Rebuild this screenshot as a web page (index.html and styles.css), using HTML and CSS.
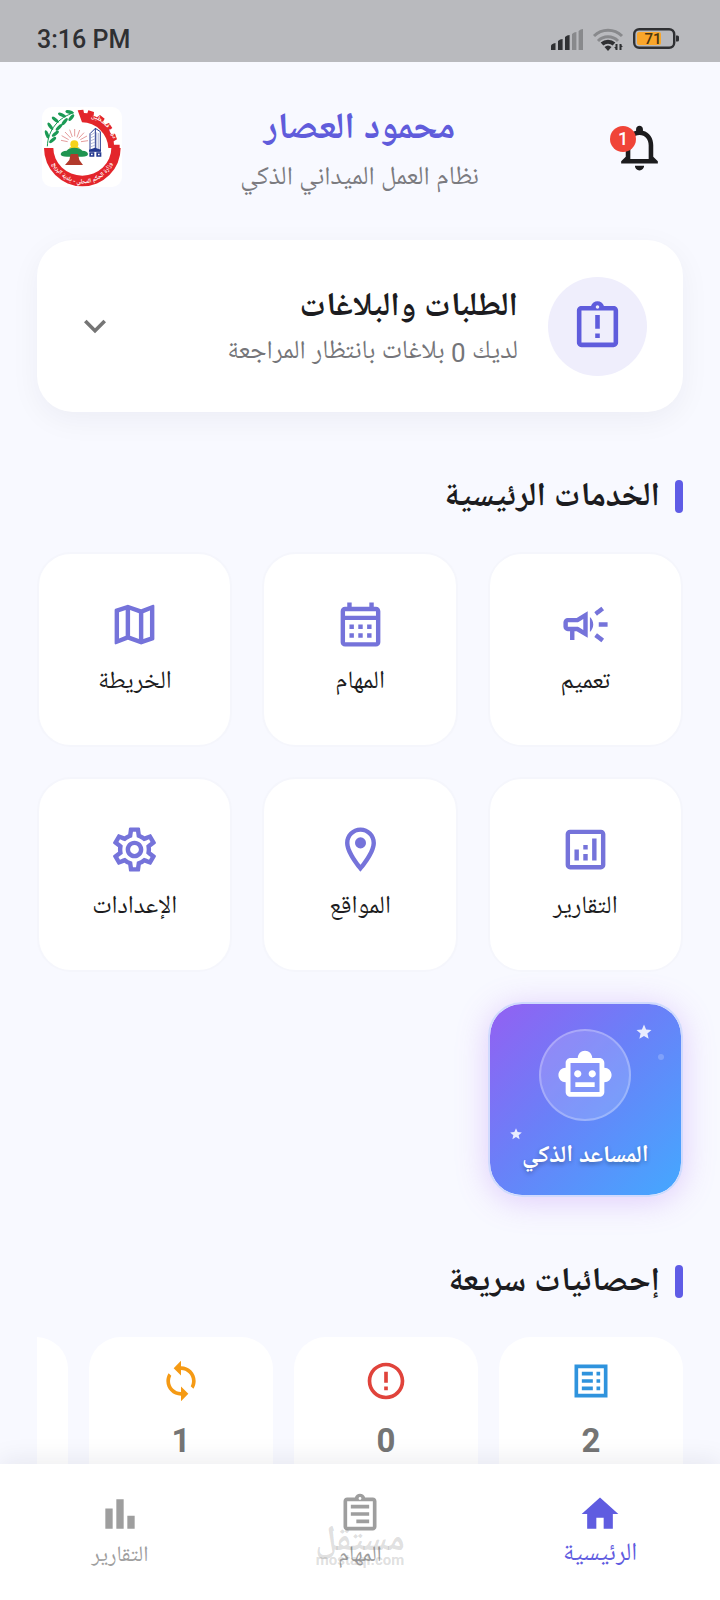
FILE: index.html
```
<!DOCTYPE html>
<html lang="ar" dir="rtl">
<head>
	<meta charset="utf-8">
	<meta name="viewport" content="width=device-width, initial-scale=1">
	<title>نظام العمل الميداني الذكي</title>
	<link rel="stylesheet" href="styles.css">
</head>
<body>
	<div class="status-bar" dir="ltr">
		<span class="time">3:16 PM</span>
		<div class="status-icons">
			<svg width="32" height="21" viewBox="0 0 32 21">
				<path fill="#2f3033" d="M0 21v-4q0-2 4.500-3v7zM7 21V12q2-2 4.600-2v11zM14 21V8q2-2 4.600-2v15z"/>
				<path fill="#88898c" d="M21 21V5q2-2 4.400-2v18zM27.600 21V2q2-2 4.400-2v21z"/>
			</svg>
			<svg width="32" height="24" viewBox="0 0 32 24" fill="none" stroke-width="3">
				<path fill="none" stroke="#88898c" d="M2 9a20 20 0 0 1 28 0M6 14a14 14 0 0 1 20 0"/>
				<path fill="none" stroke="#2f3033" stroke-width="4" d="M10 17a9 9 0 0 1 12 0"/>
				<path fill="#2f3033" d="M12.500 20q3.500-3 7 0l-3.500 4z"/>
				<path fill="none" stroke="#2f3033" stroke-width="2" d="M24.500 23v-6M28.500 17v6"/>
				<path fill="#2f3033" d="M22 20h3v3zM31 20h-3v-3z"/>
			</svg>
			<svg width="46" height="22" viewBox="0 0 46 22">
				<rect x="1.200" y="1.200" width="40" height="18.600" rx="5" fill="none" stroke="#2f3033" stroke-width="2.400"/>
				<rect x="4" y="4" width="24" height="13" rx="2" fill="#f9a62b"/>
				<path d="M43 7.500h1.500a1.500 1.500 0 0 1 1.500 1.500v3a1.500 1.500 0 0 1-1.500 1.500H43z" fill="#2f3033"/>
				<text x="20" y="16" text-anchor="middle" class="battery-text">71</text>
			</svg>
		</div>
	</div>

	<main>
		<header class="header">
			<button class="bell" aria-label="الإشعارات">
				<svg width="55" height="55" viewBox="0 0 24 24"><path d="M12 22c1.100 0 2-.9 2-2h-4c0 1.100.9 2 2 2zm6-6v-5c0-3.070-1.630-5.640-4.500-6.320V4c0-.83-.67-1.500-1.500-1.500s-1.500.67-1.500 1.500v.68C7.640 5.360 6 7.920 6 11v5l-2 2v1h16v-1l-2-2zm-2 1H8v-6c0-2.480 1.510-4.500 4-4.500s4 2.020 4 4.500v6z"/></svg>
				<span class="badge">1</span>
			</button>
			<div class="heading">
				<h1>محمود العصار</h1>
				<p>نظام العمل الميداني الذكي</p>
			</div>
			<svg class="logo" viewBox="66 48 240 240">
				<rect x="66" y="48" width="240" height="240" rx="30" fill="#fff"/>
				<!-- gear half of the ring -->
				<path fill="#e3252b" d="M173 58l17-2 2 10 10 1 3-9 17 5-1 11 10 5 9-7 14 11-5 9 7 8 11-4 10 15-8 8 4 10 12-1 6 17-10 6 1 10h17v10h-34a80 80 0 0 0-79-77z"/>
				<path fill="#e3252b" d="M72 171h28a87 83 0 0 0 174 0h28a115 115 0 0 1-230 0z"/>
				<!-- olive branch -->
				<path d="M82 166c2-50 34-87 80-101" fill="none" stroke="#1b9a55" stroke-width="3"/>
				<g fill="#1b9a55">
					<ellipse cx="148" cy="63" rx="12" ry="5" transform="rotate(12 148 63)"/>
					<ellipse cx="154" cy="80" rx="12" ry="5" transform="rotate(-50 154 80)"/>
					<ellipse cx="126" cy="72" rx="13" ry="5" transform="rotate(25 126 72)"/>
					<ellipse cx="134" cy="92" rx="13" ry="5" transform="rotate(-50 134 92)"/>
					<ellipse cx="106" cy="86" rx="13" ry="5" transform="rotate(40 106 86)"/>
					<ellipse cx="117" cy="109" rx="13" ry="5" transform="rotate(-45 117 109)"/>
					<ellipse cx="91" cy="106" rx="13" ry="5" transform="rotate(55 91 106)"/>
					<ellipse cx="106" cy="128" rx="13" ry="5" transform="rotate(-40 106 128)"/>
					<ellipse cx="81" cy="130" rx="13" ry="5" transform="rotate(70 81 130)"/>
					<ellipse cx="98" cy="147" rx="13" ry="5" transform="rotate(-40 98 147)"/>
				</g>
				<!-- sun and tree -->
				<path stroke="#d66a6a" stroke-width="2" d="M123 148l20 4M125 134l21 12M135 123l17 18M149 116l8 22M164 114v22M179 117l-8 22M192 125l-16 17M201 135l-20 11M204 149l-21 3"/>
				<circle cx="163" cy="160" r="12" fill="#f5d31c"/>
				<path fill="#f5d31c" d="M146 172q17-16 34 0z"/>
				<path fill="#1f9450" d="M122 189q2-9 18-10 6-9 23-9t24 9q16 1 17 10 0 8-18 8h-45q-19 0-19-8z"/>
				<path fill="#b23a2c" d="M152 189h22l4 18 11 15h-54l13-15z"/>
				<!-- tower -->
				<path fill="#fff" stroke="#24388f" stroke-width="3" d="M210 180v-52l16-16v68M226 112l15 10v58h-34"/>
				<path stroke="#24388f" stroke-width="1" d="M213 132l11-7M213 140l11-5M213 149l11-5M213 158l11-4M213 167l11-4M230 124v52M235 126v50"/>
				<path fill="#24388f" d="M207 176l18-6 18 6v6h-36zM208 184h15v13h-15zM229 184h15v13h-15z"/>
				<path fill="#fff" d="M213 188h5v5h-5zM234 188h5v5h-5z"/>
				<path id="ring-bottom" fill="none" d="M88 183a99 97 0 0 0 198 0"/>
				<path id="ring-top" fill="none" d="M189 79a92 92 0 0 1 92 89"/>
				<g class="ring-text" text-anchor="middle">
					<text><textPath href="#ring-bottom" startOffset="50%">وزارة الحكم المحلي - بلدية البريج</textPath></text>
					<text><textPath href="#ring-top" startOffset="50%">دولة فلسطين</textPath></text>
				</g>
			</svg>
		</header>

		<button class="requests">
			<span class="requests-icon">
				<svg width="55" height="55" viewBox="0 0 24 24"><path d="M19 3h-4.180C14.400 1.840 13.300 1 12 1s-2.400.84-2.820 2H5c-1.100 0-2 .9-2 2v14c0 1.100.9 2 2 2h14c1.100 0 2-.9 2-2V5c0-1.100-.9-2-2-2zm-7-.25c.41 0 .75.34.75.75s-.34.75-.75.75-.75-.34-.75-.75.34-.75.75-.75zM19 19H5V5h14v14zM11 15h2v2h-2zM11 7h2v6h-2z"/></svg>
			</span>
			<span class="requests-text">
				<strong>الطلبات والبلاغات</strong>
				<span>لديك 0 بلاغات بانتظار المراجعة</span>
			</span>
			<svg class="chevron" width="44" height="44" viewBox="0 0 24 24"><path d="M7.410 8.590L12 13.170l4.590-4.580L18 10l-6 6-6-6z"/></svg>
		</button>

		<h2>الخدمات الرئيسية</h2>
		<div class="services">
			<a class="tile" href="#">
				<svg viewBox="0 0 24 24"><path d="M18 11v2h4v-2h-4zM16 17.610c.96.71 2.210 1.650 3.200 2.390.4-.53.8-1.070 1.200-1.600-.99-.74-2.240-1.680-3.200-2.400-.4.54-.8 1.080-1.200 1.610zM20.400 5.600c-.4-.53-.8-1.070-1.200-1.600-.99.74-2.240 1.680-3.200 2.400.4.53.8 1.070 1.200 1.600.96-.72 2.210-1.650 3.200-2.400zM4 9c-1.100 0-2 .9-2 2v2c0 1.100.9 2 2 2h1v4h2v-4h1l5 3V6L8 9H4zm5.030 1.710L11 9.530v4.940l-1.970-1.180-.48-.29H4v-2h4.550l.48-.29zM15.500 12c0-1.330-.58-2.530-1.500-3.350v6.690c.92-.81 1.500-2.010 1.500-3.340z"/></svg>
				<span>تعميم</span>
			</a>
			<a class="tile" href="#">
				<svg viewBox="0 0 24 24"><path d="M19 4h-1V2h-2v2H8V2H6v2H5c-1.110 0-1.990.9-1.990 2L3 20c0 1.100.89 2 2 2h14c1.100 0 2-.9 2-2V6c0-1.100-.9-2-2-2zm0 16H5V10h14v10zm0-12H5V6h14v2zM9 14H7v-2h2v2zm4 0h-2v-2h2v2zm4 0h-2v-2h2v2zm-8 4H7v-2h2v2zm4 0h-2v-2h2v2zm4 0h-2v-2h2v2z"/></svg>
				<span>المهام</span>
			</a>
			<a class="tile" href="#">
				<svg viewBox="0 0 24 24"><path d="M20.500 3l-.16.03L15 5.100 9 3 3.360 4.900c-.21.07-.36.25-.36.48V20.500c0 .28.22.5.5.5l.16-.03L9 18.900l6 2.100 5.640-1.900c.21-.07.36-.25.36-.48V3.500c0-.28-.22-.5-.5-.5zM10 5.470l4 1.400v11.660l-4-1.400V5.470zm-5 .99l3-1.010v11.700l-3 1.160V6.460zm14 11.080l-3 1.010V6.860l3-1.160v11.840z"/></svg>
				<span>الخريطة</span>
			</a>
			<a class="tile" href="#">
				<svg viewBox="0 0 24 24"><path d="M19 3H5c-1.100 0-2 .9-2 2v14c0 1.100.9 2 2 2h14c1.100 0 2-.9 2-2V5c0-1.100-.9-2-2-2zm0 16H5V5h14v14zM7 12h2v5H7zM15 7h2v10h-2zM11 14h2v3h-2zM11 10h2v2h-2z"/></svg>
				<span>التقارير</span>
			</a>
			<a class="tile" href="#">
				<svg viewBox="0 0 24 24"><path d="M12 2C8.130 2 5 5.130 5 9c0 5.250 7 13 7 13s7-7.750 7-13c0-3.870-3.130-7-7-7zM7 9c0-2.760 2.240-5 5-5s5 2.240 5 5c0 2.880-2.880 7.190-5 9.880C9.920 16.210 7 11.850 7 9z"/><circle cx="12" cy="9" r="2.500"/></svg>
				<span>المواقع</span>
			</a>
			<a class="tile" href="#">
				<svg viewBox="0 0 24 24"><path d="M19.430 12.980c.04-.32.07-.64.07-.98s-.03-.66-.07-.98l2.110-1.650c.19-.15.24-.42.12-.64l-2-3.460c-.09-.16-.26-.25-.44-.25-.06 0-.12.01-.17.03l-2.490 1c-.52-.4-1.080-.73-1.690-.98l-.38-2.650C14.460 2.180 14.250 2 14 2h-4c-.25 0-.46.18-.49.42l-.38 2.650c-.61.25-1.170.59-1.690.98l-2.490-1c-.06-.02-.12-.03-.18-.03-.17 0-.34.09-.43.25l-2 3.460c-.13.22-.07.49.12.64l2.110 1.650c-.04.32-.07.65-.07.98s.03.66.07.98l-2.110 1.650c-.19.15-.24.42-.12.64l2 3.460c.09.16.26.25.44.25.06 0 .12-.01.17-.03l2.490-1c.52.4 1.080.73 1.690.98l.38 2.650c.03.24.24.42.49.42h4c.25 0 .46-.18.49-.42l.38-2.650c.61-.25 1.170-.59 1.690-.98l2.490 1c.06.02.12.03.18.03.17 0 .34-.09.43-.25l2-3.460c.12-.22.07-.49-.12-.64l-2.110-1.650zm-1.980-1.710c.04.31.05.52.05.73 0 .21-.02.43-.05.73l-.14 1.130.89.7 1.080.84-.7 1.210-1.270-.51-1.040-.42-.9.68c-.43.32-.84.56-1.250.73l-1.060.43-.16 1.130-.2 1.350h-1.400l-.19-1.350-.16-1.130-1.060-.43c-.43-.18-.83-.41-1.230-.71l-.91-.7-1.060.43-1.270.51-.7-1.210 1.080-.84.89-.7-.14-1.130c-.03-.31-.05-.54-.05-.74s.02-.43.05-.73l.14-1.130-.89-.7-1.080-.84.7-1.210 1.270.51 1.040.42.9-.68c.43-.32.84-.56 1.250-.73l1.060-.43.16-1.130.2-1.350h1.390l.19 1.350.16 1.130 1.060.43c.43.18.83.41 1.230.71l.91.7 1.060-.43 1.270-.51.7 1.210-1.070.85-.89.7.14 1.130zM12 8c-2.210 0-4 1.790-4 4s1.790 4 4 4 4-1.790 4-4-1.790-4-4-4zm0 6c-1.100 0-2-.9-2-2s.9-2 2-2 2 .9 2 2-.9 2-2 2z"/></svg>
				<span>الإعدادات</span>
			</a>
			<a class="tile assistant" href="#">
				<span class="robot">
					<svg viewBox="0 0 24 24"><path d="M20 9V7c0-1.100-.9-2-2-2h-3c0-1.660-1.340-3-3-3S9 3.340 9 5H6c-1.100 0-2 .9-2 2v2c-1.660 0-3 1.340-3 3s1.340 3 3 3v4c0 1.100.9 2 2 2h12c1.100 0 2-.9 2-2v-4c1.660 0 3-1.340 3-3s-1.340-3-3-3zm-2 10H6V7h12v12zm-9-6c-.83 0-1.500-.67-1.500-1.500S8.170 10 9 10s1.500.67 1.500 1.500S9.830 13 9 13zm7.500-1.500c0 .83-.67 1.500-1.500 1.500s-1.500-.67-1.500-1.500.67-1.500 1.500-1.500 1.500.67 1.500 1.500zM8 15h8v2H8v-2z"/></svg>
				</span>
				<span>المساعد الذكي</span>
				<svg class="star star-big" viewBox="0 0 24 24"><path d="M12 17.270L18.180 21l-1.640-7.030L22 9.240l-7.190-.61L12 2 9.190 8.630 2 9.240l5.460 4.730L5.820 21z"/></svg>
				<svg class="star star-small" viewBox="0 0 24 24"><path d="M12 17.270L18.180 21l-1.640-7.030L22 9.240l-7.190-.61L12 2 9.190 8.630 2 9.240l5.460 4.730L5.820 21z"/></svg>
				<i class="dot"></i>
			</a>
		</div>

		<h2>إحصائيات سريعة</h2>
		<div class="stats">
			<div class="stat blue">
				<svg viewBox="0 0 24 24"><path d="M3 3v18h18V3zM19 19H5V5h14zM7 7h6v2H7zM7 11h6v2H7zM7 15h6v2H7zM15 7h2v2h-2zM15 11h2v2h-2zM15 15h2v2h-2z"/></svg>
				<b>2</b>
			</div>
			<div class="stat red">
				<svg viewBox="0 0 24 24"><path d="M11 15h2v2h-2zm0-8h2v6h-2zm.99-5C6.470 2 2 6.480 2 12s4.470 10 9.990 10C17.520 22 22 17.520 22 12S17.520 2 11.990 2zM12 20c-4.420 0-8-3.580-8-8s3.580-8 8-8 8 3.580 8 8-3.580 8-8 8z"/></svg>
				<b>0</b>
			</div>
			<div class="stat orange">
				<svg viewBox="0 0 24 24"><path d="M12 4V1L8 5l4 4V6c3.310 0 6 2.690 6 6 0 1.010-.25 1.970-.7 2.800l1.460 1.460C19.540 15.030 20 13.570 20 12c0-4.420-3.580-8-8-8zm0 14c-3.310 0-6-2.690-6-6 0-1.010.25-1.970.7-2.800L5.240 7.740C4.460 8.970 4 10.430 4 12c0 4.420 3.580 8 8 8v3l4-4-4-4v3z"/></svg>
				<b>1</b>
			</div>
			<div class="stat"></div>
		</div>
	</main>

	<nav class="bottom-nav">
		<a class="active" href="#">
			<svg viewBox="0 0 24 24"><path d="M10 20v-6h4v6h5v-8h3L12 3 2 12h3v8z"/></svg>
			<span>الرئيسية</span>
		</a>
		<a href="#">
			<svg viewBox="0 0 24 24"><path d="M19 3h-4.180C14.400 1.840 13.300 1 12 1s-2.400.84-2.820 2H5c-1.100 0-2 .9-2 2v14c0 1.100.9 2 2 2h14c1.100 0 2-.9 2-2V5c0-1.100-.9-2-2-2zm-7-.25c.41 0 .75.34.75.75s-.34.75-.75.75-.75-.34-.75-.75.34-.75.75-.75zM19 19H5V5h14v14zM7 7h10v2H7zM7 11h10v2H7zM10 15h7v2h-7z"/></svg>
			<span>المهام</span>
		</a>
		<a href="#">
			<svg viewBox="0 0 24 24"><path d="M4 9h4v11H4zM16 13h4v7h-4zM10 4h4v16h-4z"/></svg>
			<span>التقارير</span>
		</a>
		<div class="watermark">
			<b>مستقل</b>
			<span>mostaql.com</span>
		</div>
	</nav>
</body>
</html>
```
FILE: styles.css
```
* {
	box-sizing: border-box;
}

body {
	margin: 0;
	height: 100vh;
	display: flex;
	flex-direction: column;
	overflow: hidden;
	background: #f8f9ff;
	color: #1c1c20;
	font-family: Roboto, "Noto Naskh Arabic UI", "Noto Naskh Arabic", "Noto Sans Arabic", "DejaVu Sans", sans-serif;
	font-size: 25px;
}

a {
	color: inherit;
	text-decoration: none;
}

button {
	border: 0;
	padding: 0;
	background: none;
	color: inherit;
	font: inherit;
	cursor: pointer;
}

svg {
	display: block;
	flex: none;
	fill: currentColor;
}

.status-bar {
	display: flex;
	flex: none;
	align-items: center;
	justify-content: space-between;
	height: 62px;
	padding: 16px 41px 0 37px;
	background: #b9babe;
	color: #2f3033;
}

.time {
	font-size: 25px;
	font-weight: 500;
}

.status-icons {
	display: flex;
	align-items: center;
	gap: 9px;
}

.battery-text {
	font-size: 15px;
	font-weight: 500;
	fill: #4a3510;
}

main {
	flex: 1;
	min-height: 0;
	padding: 0 37px;
	overflow: hidden;
}

.header {
	display: flex;
	align-items: center;
	height: 178px;
	padding: 0 2px 8px 5px;
}

.bell {
	position: relative;
	display: flex;
	justify-content: center;
	width: 84px;
	color: #1c1c1e;
}

.badge {
	position: absolute;
	top: 6px;
	left: 13px;
	width: 26px;
	height: 26px;
	border-radius: 50%;
	background: #f04438;
	color: #fff;
	font-size: 18px;
	font-weight: 500;
	line-height: 26px;
}

.heading {
	flex: 1;
	padding-top: 11px;
	text-align: center;
}

.heading h1 {
	margin: 0;
	color: #605cdb;
	font-size: 37px;
	line-height: 52px;
}

.heading p {
	margin: 0;
	color: #7b7b80;
	font-size: 26px;
	line-height: 44px;
}

.logo {
	width: 80px;
	height: 80px;
}

.ring-text {
	fill: #fff;
	font-size: 19px;
	font-weight: bold;
}

.requests {
	display: flex;
	align-items: center;
	gap: 30px;
	width: 100%;
	height: 172px;
	padding: 0 36px;
	border-radius: 36px;
	background: #fff;
	box-shadow: 0 8px 30px rgba(20, 20, 60, 0.05);
	text-align: right;
}

.requests-icon {
	display: flex;
	align-items: center;
	justify-content: center;
	width: 99px;
	height: 99px;
	border-radius: 50%;
	background: #efeefc;
	color: #5f5cdc;
}

.requests-text {
	flex: 1;
	padding-top: 10px;
	color: #757579;
	font-size: 26px;
}

.requests-text strong,
.requests-text span {
	display: block;
	line-height: 44px;
}

.requests-text strong {
	color: #1c1c20;
	font-size: 33px;
}

.chevron {
	color: #757575;
}

h2 {
	display: flex;
	align-items: center;
	gap: 15px;
	margin: 61px 0 27px;
	font-size: 33px;
	line-height: 52px;
}

h2::before {
	content: "";
	width: 8px;
	height: 33px;
	margin-bottom: 6px;
	border-radius: 4px;
	background: #5f5ce6;
}

.services {
	display: grid;
	grid-template-columns: repeat(3, 1fr);
	gap: 30px;
}

.tile {
	position: relative;
	display: flex;
	flex-direction: column;
	align-items: center;
	justify-content: center;
	gap: 14px;
	height: 195px;
	border: 2px solid #f5f6fc;
	border-radius: 34px;
	background: #fff;
	line-height: 36px;
}

.tile > svg {
	width: 53px;
	height: 53px;
	color: #7573da;
}

.assistant {
	gap: 18px;
	padding-top: 4px;
	border-color: #d0dafd;
	background: linear-gradient(135deg, #9360f2 0%, #6a80f8 45%, #44a8ff 100%) padding-box;
	box-shadow: 0 4px 32px rgba(160, 90, 240, 0.28);
	color: #fff;
	font-size: 24px;
	font-weight: bold;
	text-shadow: 0 2px 4px rgba(0, 0, 0, 0.3);
}

.robot {
	display: flex;
	align-items: center;
	justify-content: center;
	width: 92px;
	height: 92px;
	border: 2px solid rgba(255, 255, 255, 0.25);
	border-radius: 50%;
	background: rgba(255, 255, 255, 0.16);
}

.robot svg {
	width: 58px;
	height: 58px;
}

.tile .star {
	position: absolute;
	color: rgba(255, 255, 255, 0.85);
}

.tile .star-big {
	top: 19px;
	right: 28px;
	width: 18px;
	height: 18px;
}

.tile .star-small {
	bottom: 54px;
	left: 19px;
	width: 14px;
	height: 14px;
}

.dot {
	position: absolute;
	top: 50px;
	right: 17px;
	width: 6px;
	height: 6px;
	border-radius: 50%;
	background: rgba(255, 255, 255, 0.2);
}

.stats {
	display: flex;
	gap: 21px;
	overflow: hidden;
}

.stat {
	display: flex;
	flex: none;
	flex-direction: column;
	align-items: center;
	gap: 16px;
	width: 184px;
	height: 200px;
	padding-top: 22px;
	border-radius: 32px;
	background: #fff;
}

.stat svg {
	width: 44px;
	height: 44px;
}

.stat b {
	color: #757575;
	font-size: 33px;
	line-height: 44px;
}

.blue {
	color: #2f93dd;
}

.red {
	color: #e0433b;
}

.orange {
	color: #f59a14;
}

.bottom-nav {
	position: relative;
	display: flex;
	flex: none;
	height: 136px;
	padding-top: 28px;
	background: #fff;
	box-shadow: 0 -4px 24px rgba(20, 20, 60, 0.08);
}

.bottom-nav a {
	display: flex;
	flex: 1;
	flex-direction: column;
	align-items: center;
	color: #9e9e9e;
	font-size: 22px;
	line-height: 42px;
}

.bottom-nav svg {
	width: 44px;
	height: 44px;
}

.bottom-nav .active {
	color: #5f5ce0;
	font-size: 25px;
	line-height: 38px;
}

.watermark {
	position: absolute;
	top: 65px;
	left: 0;
	right: 0;
	display: flex;
	flex-direction: column;
	align-items: center;
	color: rgba(120, 120, 120, 0.24);
	pointer-events: none;
}

.watermark b {
	font-size: 35px;
	line-height: 30px;
}

.watermark span {
	margin-top: -7px;
	font-size: 15px;
	font-weight: bold;
	line-height: 16px;
}
```
